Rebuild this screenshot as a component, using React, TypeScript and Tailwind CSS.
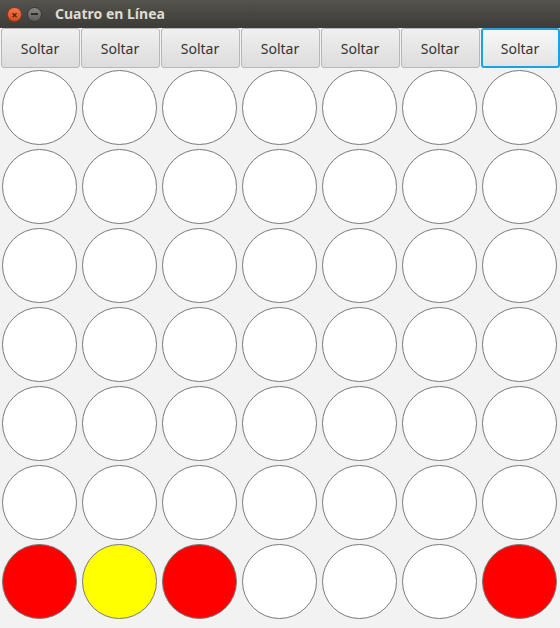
const board: string[][] = [
  ["w", "w", "w", "w", "w", "w", "w"],
  ["w", "w", "w", "w", "w", "w", "w"],
  ["w", "w", "w", "w", "w", "w", "w"],
  ["w", "w", "w", "w", "w", "w", "w"],
  ["w", "w", "w", "w", "w", "w", "w"],
  ["w", "w", "w", "w", "w", "w", "w"],
  ["r", "y", "r", "w", "w", "w", "r"],
];

const fill: Record<string, string> = {
  w: "bg-white",
  r: "bg-[#ff0000]",
  y: "bg-[#ffff00]",
};

export default function App() {
  return (
    <div className="w-[560px] h-[628px] bg-[#f2f2f2] overflow-hidden font-['Noto_Sans',sans-serif]">
      {/* title bar */}
      <div className="h-[28px] flex items-center bg-gradient-to-b from-[#55534d] to-[#3c3b37] pl-[7px] gap-[5px]">
        <span className="w-[15px] h-[15px] rounded-full bg-gradient-to-b from-[#f4784a] to-[#de4a14] border border-[#8a3a1c] flex items-center justify-center text-[#4a1f0e] text-[11px] leading-none font-bold">
          ×
        </span>
        <span className="w-[15px] h-[15px] rounded-full bg-gradient-to-b from-[#8a8884] to-[#5e5c58] border border-[#3a3935] flex items-center justify-center">
          <span className="w-[7px] h-[1.5px] bg-[#2e2d2a]" />
        </span>
        <span className="ml-[8px] text-[14px] font-bold text-[#dfdbd2] leading-none">
          Cuatro en Línea
        </span>
      </div>

      {/* drop buttons */}
      <div className="grid grid-cols-7 h-[40px]">
        {board[0].map((_, i) => (
          <button
            key={i}
            className={
              i === 6
                ? "mx-[0.5px] rounded-[3px] border-2 border-[#1fa0e0] bg-gradient-to-b from-[#f7f7f7] to-[#e4e4e4] text-[14px] text-[#333] flex items-center justify-center"
                : "mx-[0.5px] rounded-[3px] border border-[#b8b8b8] bg-gradient-to-b from-[#f0f0f0] to-[#dcdcdc] text-[14px] text-[#333] flex items-center justify-center"
            }
          >
            Soltar
          </button>
        ))}
      </div>

      {/* board */}
      <div className="grid grid-cols-7 pt-[2px]">
        {board.flatMap((row, r) =>
          row.map((c, i) => (
            <div key={`${r}-${i}`} className="h-[79px] flex justify-center pr-[1px]">
              <div className={`w-[75px] h-[75px] rounded-full border border-[#7a7a7a] ${fill[c]}`} />
            </div>
          ))
        )}
      </div>
    </div>
  );
}
